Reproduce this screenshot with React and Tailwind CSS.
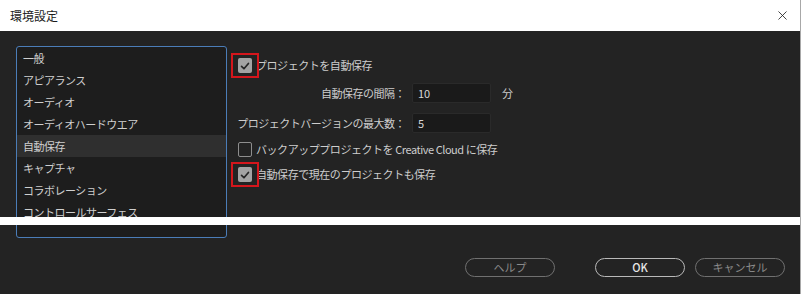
import { X } from "lucide-react";

const font = { fontFamily: '"Noto Sans CJK JP", "Noto Sans", sans-serif' };

const categories = [
  "一般",
  "アピアランス",
  "オーディオ",
  "オーディオハードウエア",
  "自動保存",
  "キャプチャ",
  "コラボレーション",
  "コントロールサーフェス",
];

function CheckIcon() {
  return (
    <svg viewBox="0 0 14 14" className="h-[12px] w-[12px]" fill="none" stroke="#262626" strokeWidth="2" strokeLinecap="round" strokeLinejoin="round">
      <path d="M3 7.5 5.8 10.2 11 4" />
    </svg>
  );
}

function Checkbox({ checked, marked, label }) {
  return (
    <div className="relative flex h-[25px] items-center">
      <span
        className={
          checked
            ? "ml-[7px] flex h-[15px] w-[14px] items-center justify-center rounded-[2px] bg-[#a3a3a3]"
            : "ml-[7px] h-[15px] w-[14px] rounded-[2px] border-[1.5px] border-[#8e8e8e]"
        }
      >
        {checked && <CheckIcon />}
      </span>
      <span className="ml-[4px] text-[11px] tracking-[-0.45px] text-[#cdcdcd]">{label}</span>
      {/* red highlight frame drawn over the checkbox */}
      {marked && <span className="pointer-events-none absolute left-0 top-0 h-[25px] w-[28px] border-2 border-[#d4161c]" />}
    </div>
  );
}

function NumberField({ label, value, unit, className }) {
  return (
    <div className={"flex h-[20px] items-center " + className}>
      <span className="w-[174px] text-right text-[11px] tracking-[-0.5px] text-[#cdcdcd]">{label}</span>
      <span className="ml-[7px] flex h-[20px] w-[79px] items-center rounded-[2px] border border-[#2a2a2a] bg-[#1a1a1a] pl-[5px] text-[11px] text-[#d6d6d6]">
        {value}
      </span>
      {unit && <span className="ml-[11px] text-[11px] text-[#cdcdcd]">{unit}</span>}
    </div>
  );
}

function PillButton({ children, primary, className = "" }) {
  return (
    <button
      className={
        "flex h-[19px] w-[90px] items-center justify-center rounded-full border text-[11px] " +
        (primary ? "border-[#b9b9b9] font-medium text-[#e6e6e6] " : "border-[#707070] text-[#8a8a8a] ") +
        className
      }
    >
      {children}
    </button>
  );
}

export default function App() {
  return (
    <div className="relative flex h-[294px] w-[801px] flex-col overflow-hidden border-r border-[#a8a8a8] bg-[#232323]" style={font}>
      {/* Title bar */}
      <div className="flex h-[31px] items-center justify-between bg-white pl-[10px] pr-[10px]">
        <span className="text-[12px] text-[#1c1c1c]">環境設定</span>
        <X className="h-[15px] w-[15px] text-[#1c1c1c]" strokeWidth={1.3} />
      </div>

      {/* Body */}
      <div className="flex pt-[15px]">
        <div className="ml-[16px] h-[192px] w-[211px] rounded-[3px] border border-[#4b7db8] bg-[#1d1d1d]">
          {categories.map((name) => (
            <div
              key={name}
              className={
                "flex h-[22px] items-center pl-[6px] text-[11px] tracking-[-0.5px] text-[#cfcfcf] " +
                (name === "自動保存" ? "bg-[#2f2f2f]" : "")
              }
            >
              {name}
            </div>
          ))}
        </div>

        <div className="ml-[4px] flex flex-col pt-[7px]">
          <Checkbox checked marked label="プロジェクトを自動保存" />
          <NumberField className="mt-[5px]" label="自動保存の間隔：" value="10" unit="分" />
          <NumberField className="mt-[10px]" label="プロジェクトバージョンの最大数：" value="5" />
          <div className="mt-[4px]">
            <Checkbox label="バックアッププロジェクトを Creative Cloud に保存" />
          </div>
          <Checkbox checked marked label="自動保存で現在のプロジェクトも保存" />
        </div>
      </div>

      {/* Footer buttons */}
      <div className="mt-[20px] flex justify-end pr-[15px]">
        <PillButton className="mr-[40px]">ヘルプ</PillButton>
        <PillButton primary className="mr-[10px]">OK</PillButton>
        <PillButton>キャンセル</PillButton>
      </div>

      {/* white strip crossing the capture */}
      <div className="pointer-events-none absolute left-0 right-0 top-[217px] h-[8px] bg-white" />
    </div>
  );
}
